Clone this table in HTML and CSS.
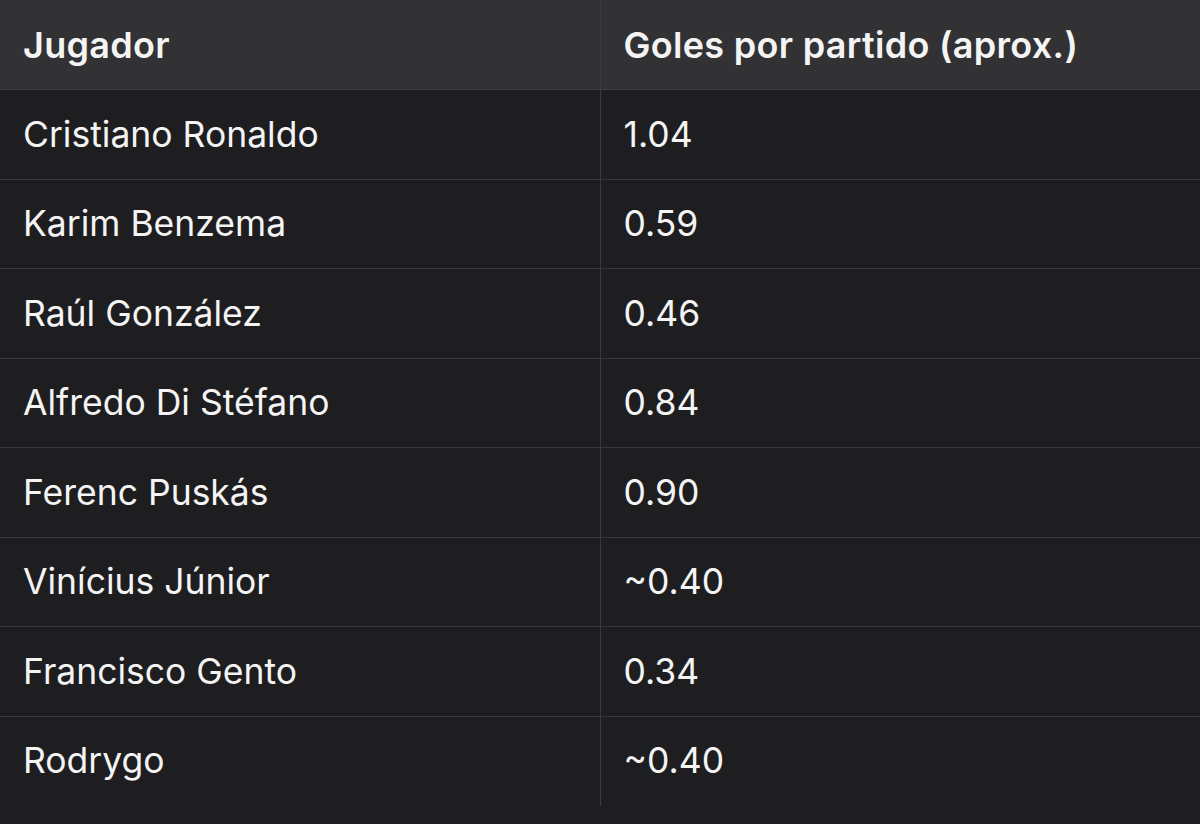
FILE: index.html
```html
<!DOCTYPE html>
<html lang="es">
<head>
<meta charset="utf-8">
<link rel="stylesheet" href="styles.css">
</head>
<body>
<table class="stats">
  <thead>
    <tr><th>Jugador</th><th>Goles por partido (aprox.)</th></tr>
  </thead>
  <tbody>
    <tr><td>Cristiano Ronaldo</td><td>1.04</td></tr>
    <tr><td>Karim Benzema</td><td>0.59</td></tr>
    <tr><td>Raúl González</td><td>0.46</td></tr>
    <tr><td>Alfredo Di Stéfano</td><td>0.84</td></tr>
    <tr><td>Ferenc Puskás</td><td>0.90</td></tr>
    <tr><td>Vinícius Júnior</td><td>~0.40</td></tr>
    <tr><td>Francisco Gento</td><td>0.34</td></tr>
    <tr><td>Rodrygo</td><td>~0.40</td></tr>
  </tbody>
</table>
</body>
</html>
```

FILE: styles.css
```css
html, body {
  margin: 0;
  padding: 0;
  background: #1e1e20;
  width: 1200px;
  height: 824px;
  overflow: hidden;
}
.stats {
  width: 1200px;
  border-collapse: collapse;
  table-layout: fixed;
  font-family: Inter, "Noto Sans", sans-serif;
  color: #f4f4f5;
}
.stats th,
.stats td {
  width: 600px;
  height: 89.5px;
  padding: 0 0 0 23px;
  text-align: left;
  box-sizing: border-box;
  line-height: 1;
}
.stats th {
  background: #323234;
  font-size: 36px;
  font-weight: 600;
  letter-spacing: 0.3px;
  border-bottom: 1px solid #3c3c3e;
}
.stats td {
  background: #1e1e20;
  font-size: 35.5px;
  font-weight: 400;
  border-top: 1px solid #38383b;
}
.stats th + th,
.stats td + td {
  border-left: 1px solid #3a3a3d;
}
.stats tbody tr:first-child td {
  border-top: none;
}
```
